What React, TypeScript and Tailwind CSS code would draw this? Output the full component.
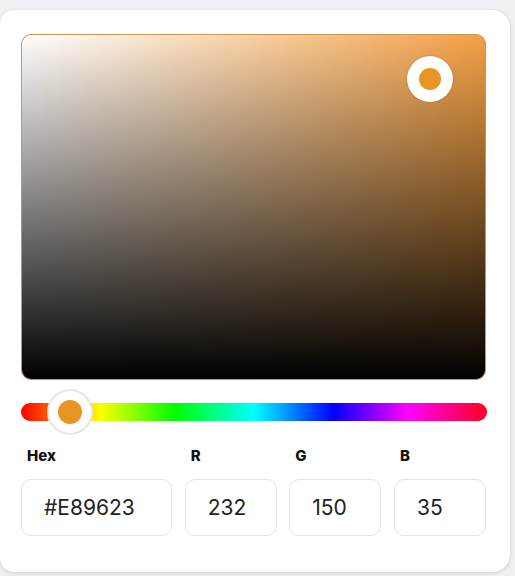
import React from "react";

export default function App() {
  const font = { fontFamily: "Inter, 'Open Sans', sans-serif" };
  return (
    <div className="w-[515px] h-[576px] bg-[#f0f0f5] pt-[10px] overflow-hidden" style={font}>
      <div className="w-[510px] h-[562px] bg-white rounded-r-[18px] rounded-l-[14px] shadow-[0_1px_4px_rgba(0,0,0,0.15)] pt-[24px] pl-[21px] pr-[24px]">
        {/* saturation area */}
        <div className="relative w-[465px] h-[346px] rounded-[10px] border border-[#c89458] overflow-hidden bg-[#f4a044]">
          <div className="absolute inset-0 bg-gradient-to-r from-white to-transparent" />
          <div className="absolute inset-0 bg-gradient-to-b from-transparent to-black" />
          <div className="absolute left-[385px] top-[21px] w-[46px] h-[46px] rounded-full bg-white shadow-[0_0_2px_rgba(0,0,0,0.25)] flex items-center justify-center">
            <div className="w-[22px] h-[22px] rounded-full bg-[#e89623]" />
          </div>
        </div>
        {/* hue slider */}
        <div className="relative mt-[23px] w-[466px] h-[18px] rounded-full bg-[linear-gradient(to_right,#ff0000_0%,#ffff00_17%,#00ff00_33%,#00ffff_50%,#0000ff_67%,#ff00ff_83%,#ff0020_100%)]">
          <div className="absolute left-[26px] top-[-14px] w-[46px] h-[46px] rounded-full bg-white border-2 border-[#e6e6e6] flex items-center justify-center">
            <div className="w-[24px] h-[24px] rounded-full bg-[#e89623]" />
          </div>
        </div>
        {/* fields */}
        <div className="mt-[26px] flex justify-between w-[465px]">
          {[
            { l: "Hex", v: "#E89623", w: "w-[151px]" },
            { l: "R", v: "232", w: "w-[92px]" },
            { l: "G", v: "150", w: "w-[92px]" },
            { l: "B", v: "35", w: "w-[92px]" },
          ].map((f) => (
            <div key={f.l} className={f.w}>
              <div className="pl-[6px] text-[15px] font-extrabold text-[#111] leading-[18px]">{f.l}</div>
              <div className="mt-[14px] h-[57px] rounded-[10px] border border-[#e4e4e4] flex items-center pl-[22px] text-[21px] text-[#222]">
                {f.v}
              </div>
            </div>
          ))}
        </div>
      </div>
    </div>
  );
}
